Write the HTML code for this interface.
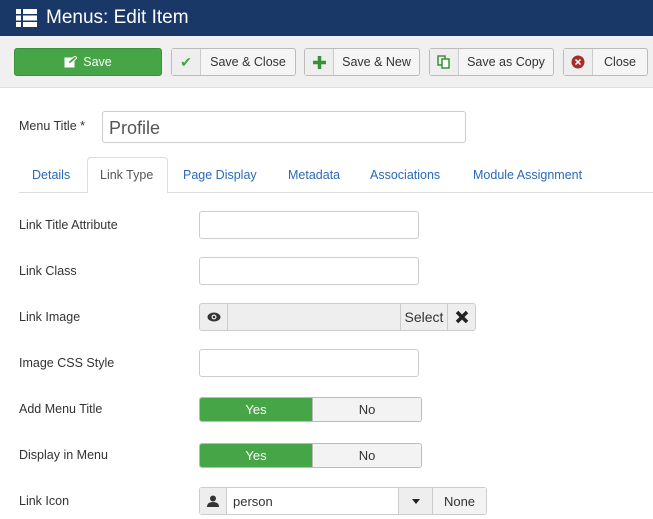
<!DOCTYPE html>
<html><head><style>
*{box-sizing:border-box;margin:0;padding:0}
body{width:653px;height:519px;overflow:hidden;background:#fff;font-family:"Liberation Sans",sans-serif;font-size:13px;color:#333;position:relative}
.a{position:absolute}
.hdr{left:0;top:0;width:653px;height:36px;background:#1a3867;color:#fff;font-size:19px}
.tb{left:0;top:36px;width:653px;height:52px;background:#f0f0f0;border-bottom:1px solid #ddd}
.btn{top:48px;height:28px;border:1px solid #bbb;border-radius:3px;background:#f5f5f5;display:flex;align-items:center;font-size:12.5px;color:#333}
.btn .ic{height:100%;border-right:1px solid #ccc;display:flex;align-items:center;justify-content:center;background:#eee}
.btn .t{flex:1;text-align:center}
.lbl{left:19px;font-size:12.5px;color:#333}
.inp{left:199px;width:220px;height:28px;border:1px solid #ccc;border-radius:3px;background:#fff}
.tab{top:168px;font-size:12.5px;color:#2a69b8}
.tg{left:199px;width:223px;height:25px;border:1px solid #bbb;border-radius:3px;display:flex;overflow:hidden;font-size:13px}
.tg div{display:flex;align-items:center;justify-content:center}
</style></head><body>
<div class="a hdr"><svg class="a" style="left:16px;top:9px" width="21" height="18"><rect x="0" y="0" width="5" height="5" fill="#fff"/><rect x="7" y="0" width="14" height="5" fill="#fff"/><rect x="0" y="6.5" width="5" height="5" fill="#fff"/><rect x="7" y="6.5" width="14" height="5" fill="#fff"/><rect x="0" y="13" width="5" height="5" fill="#fff"/><rect x="7" y="13" width="14" height="5" fill="#fff"/></svg><span class="a" style="left:46px;top:7px">Menus: Edit Item</span></div>
<div class="a tb"></div>
<div class="a btn" style="left:14px;width:148px;background:#46a546;border-color:#3d8f3d;color:#fff;justify-content:center"><svg width="13" height="12" style="margin-right:6px"><rect x="0.5" y="1.5" width="10" height="10" fill="#fff"/><path d="M4 8L5 5L11 0L13 2L7 7Z" fill="#46a546" stroke="#fff" stroke-width="1"/></svg>Save</div>
<div class="a btn" style="left:171px;width:125px"><div class="ic" style="width:29px;color:#46a546;font-size:14px">✔</div><div class="t">Save &amp; Close</div></div>
<div class="a btn" style="left:304px;width:116px"><div class="ic" style="width:29px"><svg width="13" height="13"><path d="M6.5 0V13M0 6.5H13" stroke="#3a8f3a" stroke-width="3.5"/></svg></div><div class="t">Save &amp; New</div></div>
<div class="a btn" style="left:429px;width:125px"><div class="ic" style="width:29px"><svg width="14" height="14"><rect x="1" y="1" width="7" height="9" fill="none" stroke="#3a8f3a" stroke-width="1.5"/><rect x="5" y="4" width="7" height="9" fill="#fff" stroke="#3a8f3a" stroke-width="1.5"/></svg></div><div class="t">Save as Copy</div></div>
<div class="a btn" style="left:563px;width:85px"><div class="ic" style="width:29px"><svg width="14" height="14"><circle cx="7" cy="7" r="6.5" fill="#a72d2d"/><path d="M4.5 4.5L9.5 9.5M9.5 4.5L4.5 9.5" stroke="#fff" stroke-width="1.5"/></svg></div><div class="t">Close</div></div>
<div class="a lbl" style="top:119px">Menu Title *</div>
<div class="a" style="left:102px;top:111px;width:364px;height:32px;border:1px solid #ccc;border-radius:3px;font-size:18px;padding:6px 6px;color:#555">Profile</div>
<div class="a" style="left:19px;top:192px;width:634px;height:1px;background:#ddd"></div>
<div class="a" style="left:87px;top:157px;width:81px;height:36px;border:1px solid #ddd;border-bottom:none;border-radius:4px 4px 0 0;background:#fff"></div>
<div class="a tab" style="left:32px">Details</div>
<div class="a tab" style="left:100px;color:#555">Link Type</div>
<div class="a tab" style="left:183px">Page Display</div>
<div class="a tab" style="left:288px">Metadata</div>
<div class="a tab" style="left:370px">Associations</div>
<div class="a tab" style="left:473px">Module Assignment</div>
<div class="a lbl" style="top:218px">Link Title Attribute</div>
<div class="a inp" style="top:211px"></div>
<div class="a lbl" style="top:264px">Link Class</div>
<div class="a inp" style="top:257px"></div>
<div class="a lbl" style="top:310px">Link Image</div>
<div class="a" style="left:199px;top:303px;width:277px;height:28px;border:1px solid #ccc;border-radius:3px;background:#eee;display:flex">
<div style="width:28px;border-right:1px solid #ccc;display:flex;align-items:center;justify-content:center"><svg width="14" height="10"><ellipse cx="7" cy="5" rx="6.5" ry="4.5" fill="#333"/><circle cx="7" cy="5" r="2.5" fill="#eee"/><circle cx="7" cy="5" r="1.3" fill="#333"/></svg></div>
<div style="flex:1"></div>
<div style="width:47px;border-left:1px solid #ccc;display:flex;align-items:center;justify-content:center;font-size:14px">Select</div>
<div style="width:28px;border-left:1px solid #ccc;display:flex;align-items:center;justify-content:center"><svg width="14" height="14"><path d="M2 2L12 12M12 2L2 12" stroke="#222" stroke-width="3.5"/></svg></div></div>
<div class="a lbl" style="top:356px">Image CSS Style</div>
<div class="a inp" style="top:349px"></div>
<div class="a lbl" style="top:402px">Add Menu Title</div>
<div class="a tg" style="top:397px"><div style="width:112px;background:#46a546;color:#fff">Yes</div><div style="flex:1;background:#f3f3f3;border-left:1px solid #bbb">No</div></div>
<div class="a lbl" style="top:448px">Display in Menu</div>
<div class="a tg" style="top:443px"><div style="width:112px;background:#46a546;color:#fff">Yes</div><div style="flex:1;background:#f3f3f3;border-left:1px solid #bbb">No</div></div>
<div class="a lbl" style="top:494px">Link Icon</div>
<div class="a" style="left:199px;top:487px;width:288px;height:28px;border:1px solid #ccc;border-radius:3px;display:flex;background:#fff">
<div style="width:27px;background:#eee;border-right:1px solid #ccc;display:flex;align-items:center;justify-content:center"><svg width="12" height="12"><circle cx="6" cy="3.5" r="3" fill="#333"/><path d="M0 12Q0 7 6 7Q12 7 12 12Z" fill="#333"/></svg></div>
<div style="flex:1;padding:6px 6px;font-size:13px">person</div>
<div style="width:34px;background:#eee;border-left:1px solid #ccc;display:flex;align-items:center;justify-content:center"><svg width="8" height="5"><path d="M0 0H8L4 5Z" fill="#222"/></svg></div>
<div style="width:54px;background:#f3f3f3;border-left:1px solid #ccc;display:flex;align-items:center;justify-content:center;font-size:13px">None</div></div>
</body></html>
